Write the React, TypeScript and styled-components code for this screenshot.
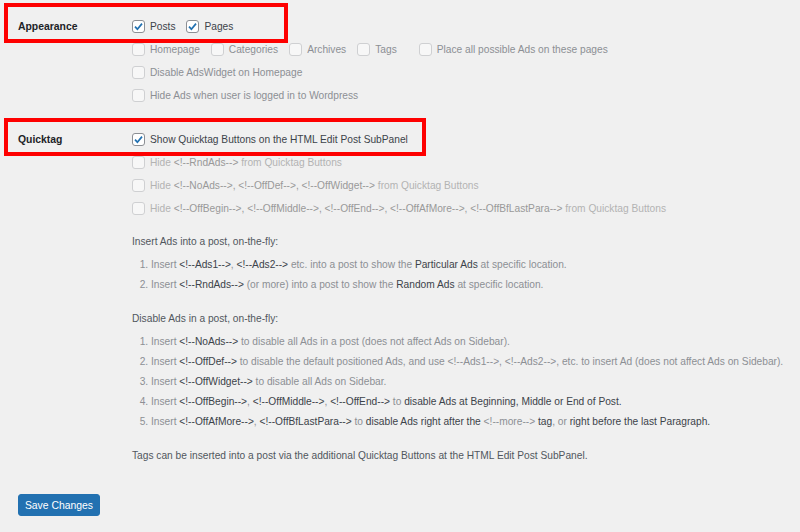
import styled, { createGlobalStyle } from 'styled-components';

const GlobalStyle = createGlobalStyle`
    html, body {
        margin: 0;
        padding: 0;
        background: #f0f0f0;
    }
    body {
        font-family: 'Liberation Sans', Arial, sans-serif;
        font-size: 10.2px;
        color: #3c434a;
    }
`;

const Page = styled.div`
    padding: 15px 0 0 18px;
    width: 782px;
    height: 517px;
    overflow: hidden;
`;

const Section = styled.div<{ $gap?: number }>`
    margin-top: ${(p) => p.$gap || 0}px;
`;

const HeadRow = styled.div<{ $boxWidth: number; $boxTop: number; $boxHeight: number }>`
    position: relative;
    display: grid;
    grid-template-columns: 114px auto;
    align-items: center;
    height: 23px;

    &::after {
        content: '';
        position: absolute;
        left: -14px;
        top: ${(p) => p.$boxTop}px;
        width: ${(p) => p.$boxWidth}px;
        height: ${(p) => p.$boxHeight}px;
        box-sizing: border-box;
        border: 4px solid #fe0000;
        pointer-events: none;
    }
`;

const Label = styled.div`
    font-weight: bold;
    color: #1d2327;
    font-size: 10.4px;
`;

const Options = styled.div`
    display: flex;
    align-items: center;
`;

const OptionRow = styled.div`
    display: flex;
    align-items: center;
    height: 23px;
    padding-left: 114px;
`;

const Option = styled.label<{ $tone: 'dark' | 'grey' | 'faint'; $push?: number }>`
    display: inline-flex;
    align-items: center;
    gap: 5px;
    margin-right: 11px;
    margin-left: ${(p) => p.$push || 0}px;
    color: ${(p) => (p.$tone === 'dark' ? '#3c434a' : p.$tone === 'grey' ? '#8c8f94' : '#b3b3b3')};
    white-space: nowrap;
`;

const Tag = styled.span`
    color: #999;
`;

const Box = styled.span<{ $checked?: boolean }>`
    display: inline-flex;
    align-items: center;
    justify-content: center;
    width: 13px;
    height: 13px;
    box-sizing: border-box;
    border: 1px solid ${(p) => (p.$checked ? '#8c8f94' : '#cfd0d2')};
    border-radius: 3px;
    background: ${(p) => (p.$checked ? '#fff' : '#f7f7f7')};
`;

const Check = () => (
    <svg width='11' height='11' viewBox='0 0 11 11'>
        <path d='M2 5.6 L4.4 8.2 L9 2.6' fill='none' stroke='#2271b1' strokeWidth='1.7' />
    </svg>
);

const CheckItem = ({
    checked,
    tone,
    push,
    children,
}: {
    checked?: boolean;
    tone: 'dark' | 'grey' | 'faint';
    push?: number;
    children: React.ReactNode;
}) => (
    <Option $tone={tone} $push={push}>
        <Box $checked={checked}>{checked && <Check />}</Box>
        <span>{children}</span>
    </Option>
);

const Help = styled.div`
    padding-left: 114px;
    margin-top: 12px;
    color: #50575e;
    line-height: 20px;
`;

const Intro = styled.div<{ $gap?: number }>`
    margin-top: ${(p) => p.$gap || 0}px;
    color: #50575e;
`;

const List = styled.ol`
    margin: 3px 0 0;
    padding-left: 19px;
    color: #8c8f94;

    li {
        line-height: 20px;
    }
`;

const Strong = styled.span`
    color: #3c434a;
`;

const Footer = styled.div`
    margin-top: 28px;
`;

const SaveButton = styled.button`
    display: block;
    height: 22px;
    width: 82px;
    padding: 0;
    border: 1px solid #2271b1;
    border-radius: 3px;
    background: #2271b1;
    color: #fff;
    font-family: 'Liberation Sans', Arial, sans-serif;
    font-size: 10.4px;
`;

function App() {
    return (
        <Page>
            <GlobalStyle />
            <Section>
                <HeadRow $boxWidth={284} $boxTop={-12} $boxHeight={40}>
                    <Label>Appearance</Label>
                    <Options>
                        <CheckItem checked tone='dark'>Posts</CheckItem>
                        <CheckItem checked tone='dark'>Pages</CheckItem>
                    </Options>
                </HeadRow>
                <OptionRow>
                    <CheckItem tone='grey'>Homepage</CheckItem>
                    <CheckItem tone='grey'>Categories</CheckItem>
                    <CheckItem tone='grey'>Archives</CheckItem>
                    <CheckItem tone='grey'>Tags</CheckItem>
                    <CheckItem tone='grey' push={11}>Place all possible Ads on these pages</CheckItem>
                </OptionRow>
                <OptionRow>
                    <CheckItem tone='grey'>Disable AdsWidget on Homepage</CheckItem>
                </OptionRow>
                <OptionRow>
                    <CheckItem tone='grey'>Hide Ads when user is logged in to Wordpress</CheckItem>
                </OptionRow>
            </Section>

            <Section $gap={21}>
                <HeadRow $boxWidth={422} $boxTop={-10} $boxHeight={38}>
                    <Label>Quicktag</Label>
                    <Options>
                        <CheckItem checked tone='dark'>Show Quicktag Buttons on the HTML Edit Post SubPanel</CheckItem>
                    </Options>
                </HeadRow>
                <OptionRow>
                    <CheckItem tone='faint'>
                        Hide <Tag>&lt;!--RndAds--&gt;</Tag> from Quicktag Buttons
                    </CheckItem>
                </OptionRow>
                <OptionRow>
                    <CheckItem tone='faint'>
                        Hide <Tag>&lt;!--NoAds--&gt;, &lt;!--OffDef--&gt;, &lt;!--OffWidget--&gt;</Tag> from Quicktag Buttons
                    </CheckItem>
                </OptionRow>
                <OptionRow>
                    <CheckItem tone='faint'>
                        Hide{' '}
                        <Tag>
                            &lt;!--OffBegin--&gt;, &lt;!--OffMiddle--&gt;, &lt;!--OffEnd--&gt;, &lt;!--OffAfMore--&gt;,
                            &lt;!--OffBfLastPara--&gt;
                        </Tag>{' '}
                        from Quicktag Buttons
                    </CheckItem>
                </OptionRow>
            </Section>

            <Help>
                <Intro>Insert Ads into a post, on-the-fly:</Intro>
                <List>
                    <li>
                        Insert <Strong>&lt;!--Ads1--&gt;</Strong>, <Strong>&lt;!--Ads2--&gt;</Strong> etc. into a post to
                        show the <Strong>Particular Ads</Strong> at specific location.
                    </li>
                    <li>
                        Insert <Strong>&lt;!--RndAds--&gt;</Strong> (or more) into a post to show the{' '}
                        <Strong>Random Ads</Strong> at specific location.
                    </li>
                </List>

                <Intro $gap={14}>Disable Ads in a post, on-the-fly:</Intro>
                <List>
                    <li>
                        Insert <Strong>&lt;!--NoAds--&gt;</Strong> to disable all Ads in a post (does not affect Ads on
                        Sidebar).
                    </li>
                    <li>
                        Insert <Strong>&lt;!--OffDef--&gt;</Strong> to disable the default positioned Ads, and use
                        &lt;!--Ads1--&gt;, &lt;!--Ads2--&gt;, etc. to insert Ad (does not affect Ads on Sidebar).
                    </li>
                    <li>
                        Insert <Strong>&lt;!--OffWidget--&gt;</Strong> to disable all Ads on Sidebar.
                    </li>
                    <li>
                        Insert <Strong>&lt;!--OffBegin--&gt;</Strong>, <Strong>&lt;!--OffMiddle--&gt;</Strong>,{' '}
                        <Strong>&lt;!--OffEnd--&gt;</Strong> to{' '}
                        <Strong>disable Ads at Beginning, Middle or End of Post.</Strong>
                    </li>
                    <li>
                        Insert <Strong>&lt;!--OffAfMore--&gt;</Strong>, <Strong>&lt;!--OffBfLastPara--&gt;</Strong> to{' '}
                        <Strong>disable Ads right after the</Strong> &lt;!--more--&gt; <Strong>tag</Strong>, or{' '}
                        <Strong>right before the last Paragraph.</Strong>
                    </li>
                </List>

                <Intro $gap={14}>
                    Tags can be inserted into a post via the additional Quicktag Buttons at the HTML Edit Post
                    SubPanel.
                </Intro>
            </Help>

            <Footer>
                <SaveButton>Save Changes</SaveButton>
            </Footer>
        </Page>
    );
}

export default App;
